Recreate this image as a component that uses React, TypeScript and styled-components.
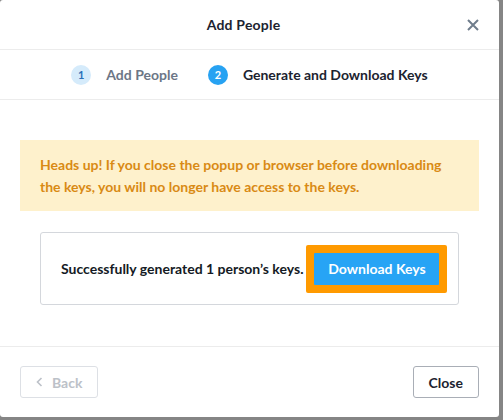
import styled, { createGlobalStyle } from 'styled-components';

const GlobalStyle = createGlobalStyle`
    html, body {
        margin: 0;
        padding: 0;
        background: #858585;
        font-family: Lato, "Open Sans", sans-serif;
    }
`

const Modal = styled.div`
    width: 499px;
    height: 417px;
    background: white;
    border-radius: 3px;
    display: flex;
    flex-direction: column;
    color: #1c2330;
`

const Header = styled.div`
    height: 49px;
    border-bottom: 1px solid #ececec;
    display: flex;
    align-items: center;
    justify-content: center;
    padding-right: 12px;
    position: relative;
`

const Title = styled.h2`
    margin: 0;
    font-size: 14px;
    font-weight: 700;
    letter-spacing: 0.2px;
`

const CloseIcon = styled.button`
    position: absolute;
    right: 18px;
    top: 17px;
    width: 16px;
    height: 16px;
    padding: 0;
    border: none;
    background: none;
    display: flex;
    align-items: center;
    justify-content: center;
`

const Steps = styled.div`
    height: 49px;
    border-bottom: 1px solid #ececec;
    display: flex;
    align-items: center;
    justify-content: center;
    gap: 30px;
`

const Step = styled.div`
    display: flex;
    align-items: center;
    gap: 15px;
`

const StepNumber = styled.span<{ $active?: boolean }>`
    width: 20px;
    height: 20px;
    border-radius: 50%;
    background: ${p => (p.$active ? '#27a2f2' : '#d5ebfb')};
    color: ${p => (p.$active ? '#fff' : '#2a6fb8')};
    font-size: 11px;
    font-weight: 700;
    display: flex;
    align-items: center;
    justify-content: center;
`

const StepLabel = styled.span<{ $active?: boolean }>`
    font-size: 14px;
    font-weight: 700;
    color: ${p => (p.$active ? '#1c2330' : '#6c7686')};
`

const Content = styled.div`
    flex: 1;
    padding: 40px 20px 0;
    display: flex;
    flex-direction: column;
    gap: 21px;
    border-bottom: 1px solid #ececec;
`

const Warning = styled.div`
    background: #fef1cc;
    color: #d98a14;
    font-size: 14px;
    font-weight: 700;
    line-height: 22px;
    padding: 14px 20px 13px;
`

const SuccessBox = styled.div`
    margin: 0 20px;
    border: 1px solid #d4d7dc;
    border-radius: 3px;
    height: 71px;
    display: flex;
    align-items: center;
    padding-left: 20px;
    gap: 3px;
`

const SuccessText = styled.span`
    font-size: 14px;
    font-weight: 700;
    color: #141a24;
`

const Highlight = styled.div`
    background: #ff9a00;
    border-radius: 2px;
    padding: 8px;
    display: flex;
`

const PrimaryButton = styled.button`
    background: #27a4f5;
    color: white;
    border: none;
    border-radius: 1px;
    height: 32px;
    width: 125px;
    font-family: inherit;
    font-size: 14px;
    font-weight: 700;
`

const Footer = styled.div`
    height: 70px;
    padding: 0 20px;
    display: flex;
    align-items: center;
    justify-content: space-between;
`

const FooterButton = styled.button<{ $disabled?: boolean }>`
    height: 32px;
    padding: 0 15px;
    background: white;
    border: 1px solid ${p => (p.$disabled ? '#dde0e5' : '#a9aeb6')};
    border-radius: 3px;
    color: ${p => (p.$disabled ? '#bcc1c8' : '#1c2330')};
    font-family: inherit;
    font-size: 14px;
    font-weight: 700;
    display: flex;
    align-items: center;
    gap: 9px;
`

export default function App() {
    return (
        <>
            <GlobalStyle />
            <Modal>
                <Header>
                    <Title>Add People</Title>
                    <CloseIcon aria-label="close">
                        <svg width="12" height="12" viewBox="0 0 12 12">
                            <path d="M1 1L11 11M11 1L1 11" stroke="#6f7d8c" strokeWidth="2" />
                        </svg>
                    </CloseIcon>
                </Header>
                <Steps>
                    <Step>
                        <StepNumber>1</StepNumber>
                        <StepLabel>Add People</StepLabel>
                    </Step>
                    <Step>
                        <StepNumber $active>2</StepNumber>
                        <StepLabel $active>Generate and Download Keys</StepLabel>
                    </Step>
                </Steps>
                <Content>
                    <Warning>
                        Heads up! If you close the popup or browser before downloading the keys, you will no longer have access to the keys.
                    </Warning>
                    <SuccessBox>
                        <SuccessText>Successfully generated 1 person’s keys.</SuccessText>
                        <Highlight>
                            <PrimaryButton>Download Keys</PrimaryButton>
                        </Highlight>
                    </SuccessBox>
                </Content>
                <Footer>
                    <FooterButton $disabled>
                        <svg width="7" height="10" viewBox="0 0 7 10">
                            <path d="M5.5 1L1.5 5L5.5 9" stroke="#bcc1c8" strokeWidth="1.6" fill="none" />
                        </svg>
                        Back
                    </FooterButton>
                    <FooterButton>Close</FooterButton>
                </Footer>
            </Modal>
        </>
    )
}
